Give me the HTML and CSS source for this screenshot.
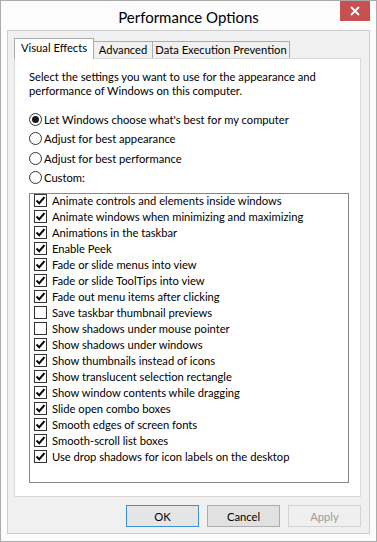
FILE: index.html
```html
<!DOCTYPE html>
<html lang="en">
<head>
  <meta charset="UTF-8">
  <title>Performance Options</title>
  <link rel="stylesheet" href="styles.css">
</head>
<body>

<div class="window">
  <div class="titlebar">
    <span></span>
    <div class="title">Performance Options</div>
    <div class="close">
      <svg width="10" height="10" viewBox="0 0 10 10"><path d="M1 1L9 9M9 1L1 9" stroke="#fff" stroke-width="1.8"/></svg>
    </div>
  </div>

  <div class="client">
    <div class="tabs">
      <div class="tab active">Visual Effects</div>
      <div class="tab tab-adv">Advanced</div>
      <div class="tab tab-dep">Data Execution Prevention</div>
    </div>

    <div class="panel">
      <p class="intro">Select the settings you want to use for the appearance and<br>performance of Windows on this computer.</p>

      <div class="radios">
        <div class="radio checked"><span class="circle"></span>Let Windows choose what's best for my computer</div>
        <div class="radio"><span class="circle"></span>Adjust for best appearance</div>
        <div class="radio"><span class="circle"></span>Adjust for best performance</div>
        <div class="radio"><span class="circle"></span>Custom:</div>
      </div>

      <div class="listbox" id="listbox"></div>
    </div>

    <div class="buttons">
      <button class="btn default">OK</button>
      <button class="btn">Cancel</button>
      <button class="btn disabled">Apply</button>
    </div>
  </div>
</div>

<script>
  const effects = [
    ["Animate controls and elements inside windows", true],
    ["Animate windows when minimizing and maximizing", true],
    ["Animations in the taskbar", true],
    ["Enable Peek", true],
    ["Fade or slide menus into view", true],
    ["Fade or slide ToolTips into view", true],
    ["Fade out menu items after clicking", true],
    ["Save taskbar thumbnail previews", false],
    ["Show shadows under mouse pointer", false],
    ["Show shadows under windows", true],
    ["Show thumbnails instead of icons", true],
    ["Show translucent selection rectangle", true],
    ["Show window contents while dragging", true],
    ["Slide open combo boxes", true],
    ["Smooth edges of screen fonts", true],
    ["Smooth-scroll list boxes", true],
    ["Use drop shadows for icon labels on the desktop", true]
  ];

  const check = '<svg width="11" height="11" viewBox="0 0 11 11"><path d="M1.5 5.5L4.2 8.2L9.5 2.2" fill="none" stroke="#000" stroke-width="2"/></svg>';
  const listbox = document.getElementById('listbox');

  effects.forEach(([label, on]) => {
    const row = document.createElement('div');
    row.className = 'item';
    row.innerHTML = `<span class="box">${on ? check : ''}</span>${label}`;
    listbox.appendChild(row);
  });
</script>

</body>
</html>
```

FILE: styles.css
```css
* {
  box-sizing: border-box;
  margin: 0;
  padding: 0;
}
body {
  font-family: Lato, "Liberation Sans", sans-serif;
  font-size: 11.2px;
  color: #000;
  background: #fff;
}
.window {
  width: 377px;
  height: 542px;
  border: 1px solid #ababab;
  background: #fcfcfc;
  padding: 0 6px 7px 6px;
  display: flex;
  flex-direction: column;
}
.titlebar {
  height: 29px;
  display: grid;
  grid-template-columns: 1fr auto 1fr;
  align-items: start;
}
.title {
  font-size: 15px;
  line-height: 20px;
  padding-top: 6px;
  color: #000;
}
.close {
  justify-self: end;
  width: 30px;
  height: 20px;
  background: #c75050;
  display: flex;
  align-items: center;
  justify-content: center;
}
.client {
  flex: 1;
  border: 1px solid #cdcdcd;
  background: #f0f0f0;
  padding: 7px 8px 6px 6px;
  display: flex;
  flex-direction: column;
}
.tabs {
  height: 20px;
  display: flex;
  align-items: flex-end;
}
.tab {
  height: 17px;
  border: 1px solid #acacac;
  border-bottom: none;
  background: #f0f0f0;
  text-align: center;
  line-height: 16px;
  margin-left: -1px;
  white-space: nowrap;
}
.tab.active {
  height: 21px;
  margin-left: 0;
  margin-bottom: -1px;
  background: #fff;
  line-height: 18px;
  width: 80px;
  position: relative;
  z-index: 1;
}
.tab-adv {
  width: 60px;
}
.tab-dep {
  width: 138px;
}
.panel {
  height: 439px;
  border: 1px solid #d9d9d9;
  background: #fff;
  padding: 11px 11px 13px 14px;
  display: flex;
  flex-direction: column;
}
.intro {
  line-height: 14px;
  white-space: nowrap;
}
.radios {
  margin-top: 15px;
  display: flex;
  flex-direction: column;
  gap: 6.33px;
}
.radio {
  height: 13px;
  display: flex;
  align-items: center;
  white-space: nowrap;
}
.circle {
  width: 13px;
  height: 13px;
  border: 1px solid #333;
  border-radius: 50%;
  background: #fff;
  margin-right: 2px;
  display: flex;
  align-items: center;
  justify-content: center;
  flex-shrink: 0;
}
.radio.checked .circle::after {
  content: "";
  width: 7px;
  height: 7px;
  border-radius: 50%;
  background: #1a1a1a;
}
.listbox {
  flex: 1;
  margin-top: 9px;
  border: 1px solid #828790;
  background: #fff;
  padding: 0 4px;
}
.item {
  height: 13px;
  margin-bottom: 3px;
  display: flex;
  align-items: center;
  white-space: nowrap;
}
.box {
  width: 13px;
  height: 13px;
  border: 1px solid #333;
  background: #fff;
  margin-right: 5px;
  display: flex;
  align-items: center;
  justify-content: center;
  flex-shrink: 0;
}
.buttons {
  margin-top: 8px;
  display: flex;
  justify-content: flex-end;
  gap: 8px;
}
.btn {
  width: 73px;
  height: 22px;
  font-family: inherit;
  font-size: 11.2px;
  color: #000;
  background: #e1e1e1;
  border: 1px solid #adadad;
}
.btn.default {
  border-color: #3c8fd8;
  background: #e5e5e5;
}
.btn.disabled {
  color: #9c9c9c;
  background: #efefef;
  border-color: #d3d3d3;
}
```
